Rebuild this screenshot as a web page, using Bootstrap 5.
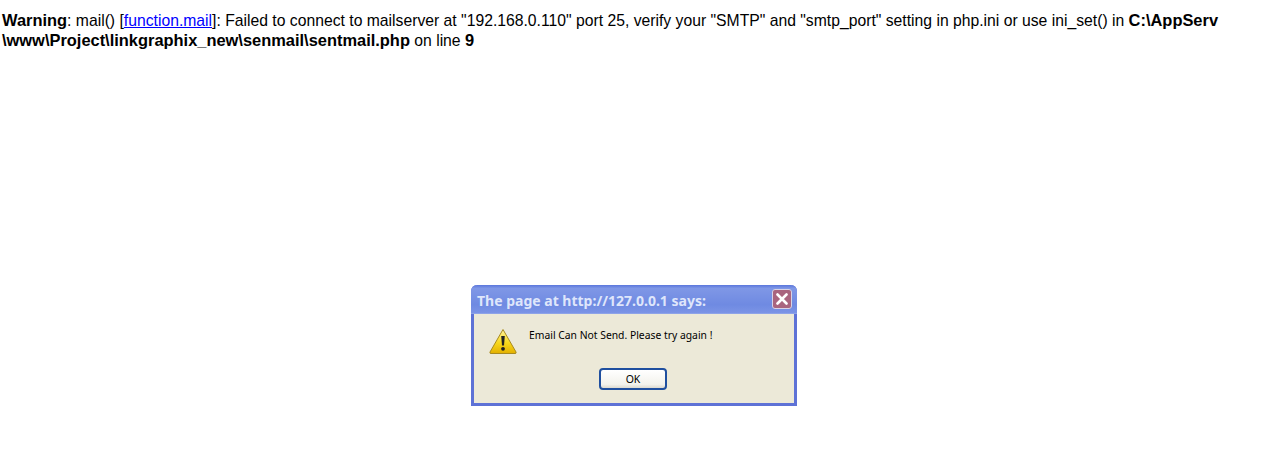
<!DOCTYPE html>
<html lang="en">
<head>
<meta charset="utf-8">
<title>Warning</title>
<link href="https://cdn.jsdelivr.net/npm/bootstrap@5.3.0/dist/css/bootstrap.min.css" rel="stylesheet">
<style>
html,body{height:100%;background:#fff}
body{font-family:"Liberation Sans",Arial,sans-serif;font-size:15.73px;line-height:20px;color:#000;overflow:hidden}
.php-msg{padding:11px 0 0 2px;width:1260px;margin:0;white-space:nowrap}
.php-msg b{font-weight:700;font-size:16.43px;line-height:1}
.php-msg a{color:#00f;text-decoration:underline}
.xp-dialog{position:absolute;left:471px;top:285px;width:326px;height:121px;background:#ece9d8;border:3px solid #5e72d6;border-top:0;border-radius:6px 6px 0 0;font-family:"Noto Sans",Tahoma,sans-serif}
.xp-title{height:29px;margin:0 -3px;background:linear-gradient(180deg,#5a76dc 0,#7f97e6 12%,#6f8ae2 70%,#7b94e6 100%);border-radius:6px 6px 0 0;padding:4px 5px 0 6px;border-bottom:1px solid #8ea3e8}
.xp-title-text{font-family:"Noto Sans",Verdana,sans-serif;font-weight:700;font-size:14px;color:#dfe6fb;line-height:1;white-space:nowrap}
.xp-close{width:20px;height:20px;margin-top:-4px;background:#a9657f;border:1px solid #d8d3e6;border-radius:3px;padding:0}
.xp-body{padding:13px 0 0 14px;gap:11px}
.xp-text{font-size:10.35px;line-height:14px;padding-top:1px;color:#000;white-space:nowrap}
.xp-actions{margin-top:13px;padding-right:2px}
.xp-ok{width:68px;height:22px;padding:0;font-size:10.5px;line-height:18px;color:#000;background:linear-gradient(180deg,#fff,#f3f2ec 80%,#dcd9cf);border:2px solid #1f4f9f;border-radius:4px}
</style>
</head>
<body>
<p class="php-msg"><b>Warning</b>: mail() [<a href="#">function.mail</a>]: Failed to connect to mailserver at "192.168.0.110" port 25, verify your "SMTP" and "smtp_port" setting in php.ini or use ini_set() in <b>C:\AppServ<br>\www\Project\linkgraphix_new\senmail\sentmail.php</b> on line <b>9</b></p>
<div class="xp-dialog d-flex flex-column">
  <div class="xp-title d-flex align-items-center justify-content-between">
    <span class="xp-title-text">The page at http://127.0.0.1 says:</span>
    <span class="xp-close d-flex align-items-center justify-content-center">
      <svg width="12" height="12" viewBox="0 0 12 12"><path d="M1.5 1.5l9 9M10.5 1.5l-9 9" stroke="#fff" stroke-width="2.6" stroke-linecap="round"/></svg>
    </span>
  </div>
  <div class="xp-body d-flex align-items-start">
    <svg width="30" height="28" viewBox="0 0 30 28" class="flex-shrink-0">
      <defs><linearGradient id="warnfill" x1="0" y1="0" x2="0" y2="1"><stop offset="0" stop-color="#fff3a0"/><stop offset=".55" stop-color="#f8d81c"/><stop offset="1" stop-color="#e3b000"/></linearGradient></defs>
      <path d="M15 2.5 L28 25 Q28.5 26.5 27 26.5 L3 26.5 Q1.5 26.5 2 25 Z" fill="url(#warnfill)" stroke="#a88a20" stroke-width="1" stroke-linejoin="round"/>
      <path d="M13.2 9 h3.6 l-.8 9.5 h-2 z" fill="#222"/>
      <circle cx="15" cy="21.8" r="1.9" fill="#222"/>
    </svg>
    <div class="xp-text">Email Can Not Send. Please try again !</div>
  </div>
  <div class="xp-actions d-flex justify-content-center">
    <button type="button" class="xp-ok">OK</button>
  </div>
</div>
<script src="https://cdn.jsdelivr.net/npm/bootstrap@5.3.0/dist/js/bootstrap.bundle.min.js"></script>
</body>
</html>
